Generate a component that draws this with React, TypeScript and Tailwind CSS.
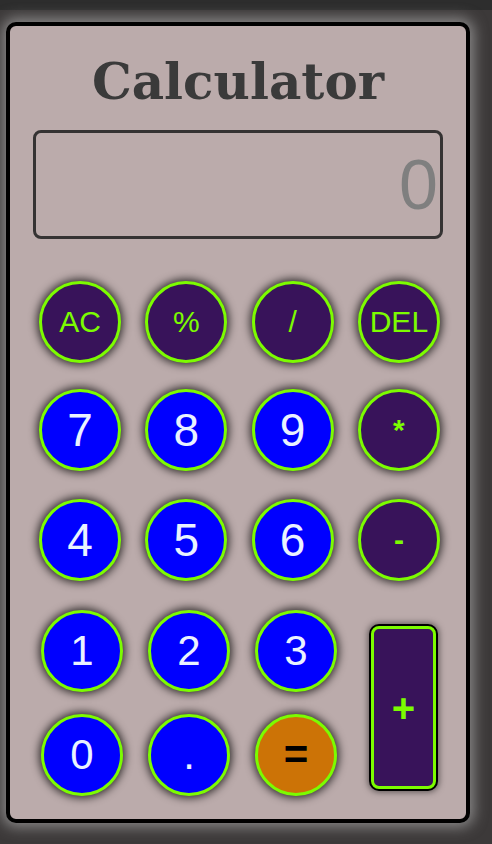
const sans = { fontFamily: '"Liberation Sans", Arial, sans-serif' };

type Key = { label: string; kind: 'op' | 'num' | 'eq'; size?: string };

function Circle({ label, kind, size }: Key) {
  const tone =
    kind === 'num'
      ? 'bg-[#0000ff] text-[#eaf2ff]'
      : kind === 'eq'
        ? 'bg-[#cc7306] text-black font-bold'
        : 'bg-[#38135a] text-[#7cfc00]';
  return (
    <button
      className={`flex h-[82px] w-[82px] items-center justify-center rounded-full border-[3px] border-[#7cfc00] leading-none shadow-[0_0_8px_2px_rgba(0,0,0,0.75)] ${tone} ${size ?? 'text-[30px]'}`}
      style={sans}
    >
      {label}
    </button>
  );
}

export default function App() {
  return (
    <div className="min-h-[844px] w-[492px] bg-[#3c3939]">
      <div className="h-[10px] bg-[#2d2d2d]" />
      <div className="px-[6px] pt-[12px]">
        <div className="h-[801px] w-[464px] rounded-[10px] border-4 border-black bg-[#bbabab] shadow-[0_0_14px_4px_rgba(200,200,200,0.55)]">
          <h1
            className="pt-[18px] text-center text-[50px] font-bold leading-[76px] text-[#3a3a3a]"
            style={{ fontFamily: '"DejaVu Serif", Georgia, serif' }}
          >
            Calculator
          </h1>
          <div className="ml-[23px] mt-[10px] flex h-[109px] w-[410px] items-center justify-end rounded-[8px] border-[3px] border-[#353333] pr-[2px]">
            <span className="text-[70px] leading-none text-[#7f7f7f]" style={sans}>
              0
            </span>
          </div>

          <div className="ml-[29px] mt-[42px] grid w-[401px] grid-cols-[82px_82px_82px_82px] gap-x-[24.3px]">
            <Circle label="AC" kind="op" />
            <Circle label="%" kind="op" />
            <Circle label="/" kind="op" />
            <Circle label="DEL" kind="op" />
          </div>
          <div className="ml-[29px] mt-[26px] grid w-[401px] grid-cols-[82px_82px_82px_82px] gap-x-[24.3px]">
            <Circle label="7" kind="num" size="text-[46px]" />
            <Circle label="8" kind="num" size="text-[46px]" />
            <Circle label="9" kind="num" size="text-[46px]" />
            <Circle label="*" kind="op" size="text-[30px] font-bold" />
          </div>
          <div className="ml-[29px] mt-[28px] grid w-[401px] grid-cols-[82px_82px_82px_82px] gap-x-[24.3px]">
            <Circle label="4" kind="num" size="text-[46px]" />
            <Circle label="5" kind="num" size="text-[46px]" />
            <Circle label="6" kind="num" size="text-[46px]" />
            <Circle label="-" kind="op" size="text-[30px] font-bold" />
          </div>

          <div className="ml-[31px] mt-[29px] flex">
            <div className="grid grid-cols-[82px_82px_82px] gap-x-[25px] gap-y-[22px]">
              <Circle label="1" kind="num" size="text-[42px]" />
              <Circle label="2" kind="num" size="text-[42px]" />
              <Circle label="3" kind="num" size="text-[42px]" />
              <Circle label="0" kind="num" size="text-[42px]" />
              <Circle label="." kind="num" size="text-[42px]" />
              <Circle label="=" kind="eq" size="text-[42px]" />
            </div>
            <button
              className="ml-[34px] mt-[16px] flex h-[163px] w-[65px] items-center justify-center rounded-[8px] border-[3px] border-[#7cfc00] bg-[#38135a] text-[40px] font-bold leading-none text-[#7cfc00] shadow-[0_0_0_2px_#000,0_0_6px_3px_rgba(0,0,0,0.5)]"
              style={sans}
            >
              +
            </button>
          </div>
        </div>
      </div>
    </div>
  );
}
